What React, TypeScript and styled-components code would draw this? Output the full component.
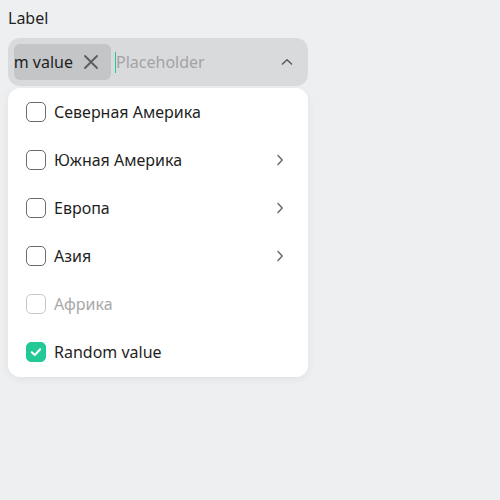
import React from "react";
import styled, { createGlobalStyle } from "styled-components";

const Global = createGlobalStyle`
  html, body { margin: 0; padding: 0; background: #eeeff1; }
  body { font-family: "Noto Sans", sans-serif; color: #1f1f1f; }
`;

const Page = styled.div`
  padding: 8px;
  width: 300px;
`;

const Label = styled.div`
  font-size: 16px;
  line-height: 20px;
  color: #1f1f1f;
  margin-bottom: 10px;
`;

const Field = styled.div`
  height: 48px;
  box-sizing: border-box;
  background: #d9dadc;
  border-radius: 12px;
  padding: 6px 14px 6px 6px;
  display: flex;
  align-items: center;
`;

const Chip = styled.div`
  width: 97px;
  height: 36px;
  box-sizing: border-box;
  border-radius: 6px;
  background: #c4c5c7;
  display: flex;
  align-items: center;
  justify-content: flex-end;
  gap: 10px;
  padding-right: 12px;
  overflow: hidden;
  flex-shrink: 0;
`;

const ChipText = styled.span`
  white-space: nowrap;
  font-size: 16px;
  color: #1f1f1f;
  flex-shrink: 0;
`;

const Input = styled.div`
  flex: 1;
  display: flex;
  align-items: center;
  margin-left: 4px;
  font-size: 16px;
  color: #a2a3a5;
`;

const Caret = styled.span`
  width: 1px;
  height: 21px;
  background: #22c997;
`;

const Menu = styled.div`
  margin-top: 2px;
  background: #ffffff;
  border-radius: 12px;
  box-shadow: 0 2px 8px rgba(0, 0, 0, 0.06);
  padding-bottom: 1px;
`;

const Row = styled.div<{ $disabled?: boolean }>`
  height: 48px;
  display: flex;
  align-items: center;
  padding: 0 22px 0 18px;
  font-size: 16px;
  color: ${(p) => (p.$disabled ? "#a8a8a8" : "#1f1f1f")};
`;

const Box = styled.span<{ $checked?: boolean; $disabled?: boolean }>`
  width: 20px;
  height: 20px;
  box-sizing: border-box;
  border-radius: 5px;
  border: 1.8px solid
    ${(p) => (p.$checked ? "#22c997" : p.$disabled ? "#c6c6c6" : "#6b6b6b")};
  background: ${(p) => (p.$checked ? "#22c997" : "transparent")};
  display: flex;
  align-items: center;
  justify-content: center;
  margin-right: 8px;
  flex-shrink: 0;
`;

const RowText = styled.span`
  flex: 1;
`;

const Close = () => (
  <svg width="16" height="16" viewBox="0 0 16 16" style={{ flexShrink: 0 }}>
    <path d="M2 2L14 14M14 2L2 14" stroke="#5c5c5c" strokeWidth="1.8" strokeLinecap="round" />
  </svg>
);

const ChevronUp = () => (
  <svg width="14" height="14" viewBox="0 0 14 14">
    <path d="M2.5 9L7 4.8L11.5 9" stroke="#5a5a5a" strokeWidth="1.5" fill="none" strokeLinecap="round" strokeLinejoin="round" />
  </svg>
);

const ChevronRight = () => (
  <svg width="12" height="14" viewBox="0 0 12 14">
    <path d="M4 2.5L8.2 7L4 11.5" stroke="#6a6a6a" strokeWidth="1.5" fill="none" strokeLinecap="round" strokeLinejoin="round" />
  </svg>
);

const Check = () => (
  <svg width="14" height="14" viewBox="0 0 14 14">
    <path d="M2.8 7.2L5.8 10L11.2 4.2" stroke="#ffffff" strokeWidth="2" fill="none" strokeLinecap="round" strokeLinejoin="round" />
  </svg>
);

const items = [
  { label: "Северная Америка", sub: false },
  { label: "Южная Америка", sub: true },
  { label: "Европа", sub: true },
  { label: "Азия", sub: true },
  { label: "Африка", sub: false, disabled: true },
  { label: "Random value", sub: false, checked: true },
];

export default function App() {
  return (
    <>
      <Global />
      <Page>
        <Label>Label</Label>
        <Field>
          <Chip>
            <ChipText>Random value</ChipText>
            <Close />
          </Chip>
          <Input>
            <Caret />
            Placeholder
          </Input>
          <ChevronUp />
        </Field>
        <Menu>
          {items.map((it) => (
            <Row key={it.label} $disabled={it.disabled}>
              <Box $checked={it.checked} $disabled={it.disabled}>
                {it.checked && <Check />}
              </Box>
              <RowText>{it.label}</RowText>
              {it.sub && <ChevronRight />}
            </Row>
          ))}
        </Menu>
      </Page>
    </>
  );
}
